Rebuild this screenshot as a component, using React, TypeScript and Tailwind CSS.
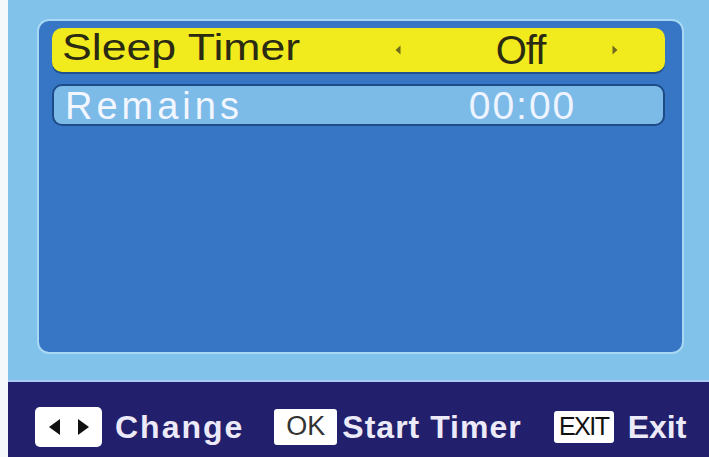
import React from "react";

const F = { fontFamily: '"Liberation Sans", Arial, sans-serif' } as const;

function Arrow({ dir }: { dir: "l" | "r" }) {
  return (
    <svg width="6" height="10" viewBox="0 0 6 10" className="block">
      {dir === "l" ? (
        <path d="M5.5 0.5 L0.5 5 L5.5 9.5 Z" fill="#6f6a1c" />
      ) : (
        <path d="M0.5 0.5 L5.5 5 L0.5 9.5 Z" fill="#6f6a1c" />
      )}
    </svg>
  );
}

export default function App() {
  return (
    <div className="flex h-[457px] w-[709px] overflow-hidden bg-white" style={F}>
      <div className="w-[8px] shrink-0 bg-[#f4f8fb]" />
      <div className="flex flex-1 flex-col">
        <div className="flex h-[380px] flex-col bg-[#80c2ea] pl-[29px] pr-[25px] pt-[19px] pb-[26px]">
          <div className="flex-1 rounded-[12px] border-2 border-[#a9d8f4] bg-[#3676c4] pl-[13px] pr-[17px] pt-[7px]">
            <div className="grid h-[44px] grid-cols-[333px_6px_211px_6px] items-center rounded-[10px] bg-[#f1ea1c] pl-[10px] shadow-[0_2px_0_#1f4f8c]">
              <div className="pb-[4px]">
                <span className="inline-block origin-left scale-x-[1.24] text-[36px] leading-none text-[#2b2a12]">
                  Sleep Timer
                </span>
              </div>
              <Arrow dir="l" />
              <div className="pl-[28px] text-center text-[40px] leading-none tracking-[-1px] text-[#2b2a12]">
                Off
              </div>
              <Arrow dir="r" />
            </div>
            <div className="mt-[12px] grid h-[42px] grid-cols-[333px_6px_211px_6px] items-center rounded-[10px] border-2 border-[#1e4b86] bg-[#7cbae7] pl-[10px]">
              <div className="pl-[1px] text-[38px] leading-none tracking-[4px] text-[#f2f6ff]">
                Remains
              </div>
              <div />
              <div className="pl-[28px] text-center text-[39px] leading-none tracking-[2px] text-[#eef4ff]">
                00:00
              </div>
              <div />
            </div>
          </div>
        </div>
        <div className="h-[2px] bg-[#a9c9f2]" />
        <div className="flex flex-1 items-center bg-[#221f6c] pl-[27px] pt-[14px] text-[#eceaf8]">
          <div className="flex h-[40px] w-[67px] items-center justify-center gap-[18px] rounded-[5px] bg-white">
            <svg width="11" height="16" viewBox="0 0 11 16">
              <path d="M11 0 L0 8 L11 16 Z" fill="#111" />
            </svg>
            <svg width="11" height="16" viewBox="0 0 11 16">
              <path d="M0 0 L11 8 L0 16 Z" fill="#111" />
            </svg>
          </div>
          <span className="ml-[13px] text-[32px] font-bold leading-none tracking-[2px]">Change</span>
          <div className="ml-[30px] flex h-[36px] w-[63px] items-center justify-center rounded-[3px] bg-white text-[27px] leading-none text-[#333]">
            OK
          </div>
          <span className="ml-[5px] text-[32px] font-bold leading-none tracking-[1px]">Start Timer</span>
          <div className="ml-[32px] flex h-[32px] w-[60px] items-center justify-center rounded-[3px] bg-white text-[25px] leading-none tracking-[-1.5px] text-[#111]">
            EXIT
          </div>
          <span className="ml-[14px] text-[32px] font-bold leading-none">Exit</span>
        </div>
      </div>
    </div>
  );
}
